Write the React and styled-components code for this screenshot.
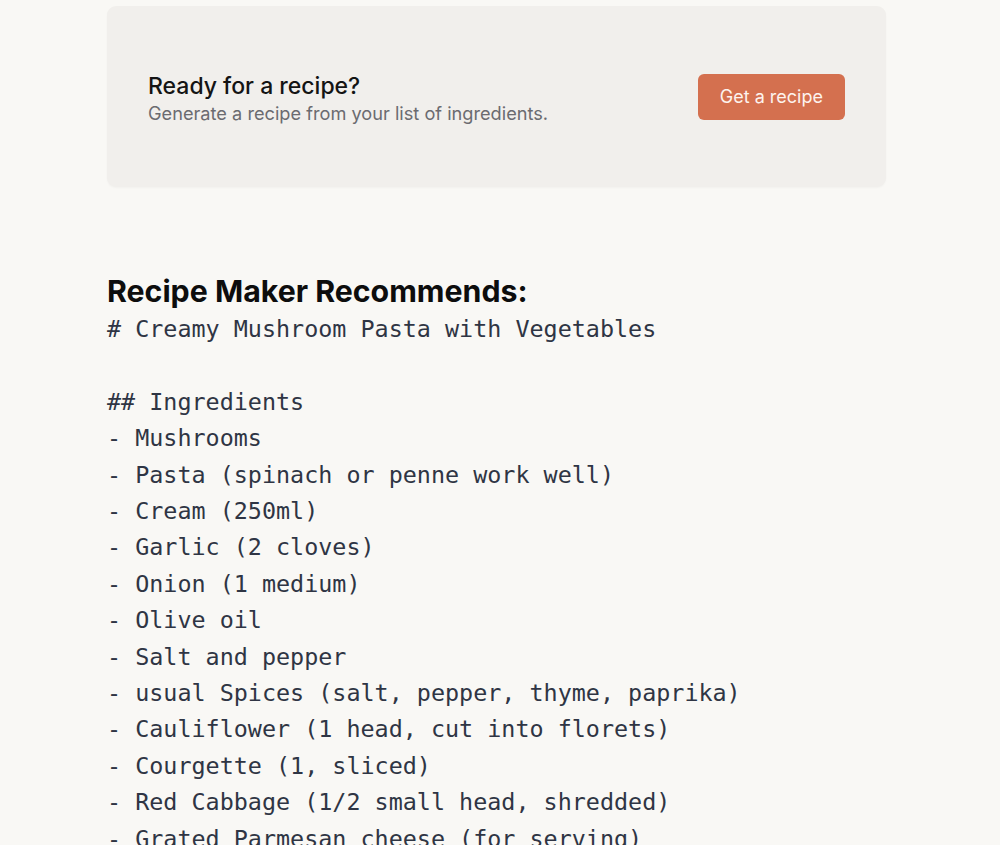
import React from "react";
import styled, { createGlobalStyle } from "styled-components";

const GlobalStyle = createGlobalStyle`
  html, body {
    margin: 0;
    padding: 0;
    background: #f9f8f5;
  }
  body {
    font-family: Inter, "Liberation Sans", sans-serif;
    color: #111;
  }
`;

const Page = styled.main`
  width: 779px;
  margin-left: 107px;
  padding-top: 6px;
`;

const Card = styled.section`
  display: flex;
  align-items: center;
  justify-content: space-between;
  height: 181px;
  padding: 0 41px;
  box-sizing: border-box;
  background: #f1efec;
  border-radius: 9px;
  box-shadow: 0 1px 2px rgba(0, 0, 0, 0.03);
`;

const CardText = styled.div`
  display: flex;
  flex-direction: column;
  gap: 2px;
  padding-top: 4px;
`;

const CardTitle = styled.h2`
  margin: 0;
  font-size: 23px;
  font-weight: 500;
  line-height: 26px;
  color: #141414;
`;

const CardSubtitle = styled.p`
  margin: 0;
  font-size: 18.2px;
  line-height: 24px;
  color: #6b6b70;
`;

const Button = styled.button`
  height: 46px;
  padding: 0 22px;
  border: none;
  border-radius: 6px;
  background: #d4704f;
  color: #fdf3ee;
  font-family: Inter, "Liberation Sans", sans-serif;
  font-size: 18px;
  cursor: pointer;
`;

const Result = styled.section`
  margin-top: 86px;
`;

const Heading = styled.h2`
  margin: 0;
  font-size: 30.3px;
  font-weight: 700;
  line-height: 36px;
  color: #0d0d0d;
`;

const Recipe = styled.pre`
  margin: 2px 0 0;
  font-family: "DejaVu Sans Mono", "Liberation Mono", monospace;
  font-size: 23.4px;
  line-height: 36.4px;
  color: #2f3544;
  white-space: pre-wrap;
`;

const recipe = `# Creamy Mushroom Pasta with Vegetables

## Ingredients
- Mushrooms
- Pasta (spinach or penne work well)
- Cream (250ml)
- Garlic (2 cloves)
- Onion (1 medium)
- Olive oil
- Salt and pepper
- usual Spices (salt, pepper, thyme, paprika)
- Cauliflower (1 head, cut into florets)
- Courgette (1, sliced)
- Red Cabbage (1/2 small head, shredded)
- Grated Parmesan cheese (for serving)
- Fresh parsley (chopped)`;

export default function App() {
  return (
    <>
      <GlobalStyle />
      <Page>
        <Card>
          <CardText>
            <CardTitle>Ready for a recipe?</CardTitle>
            <CardSubtitle>Generate a recipe from your list of ingredients.</CardSubtitle>
          </CardText>
          <Button>Get a recipe</Button>
        </Card>
        <Result>
          <Heading>Recipe Maker Recommends:</Heading>
          <Recipe>{recipe}</Recipe>
        </Result>
      </Page>
    </>
  );
}
